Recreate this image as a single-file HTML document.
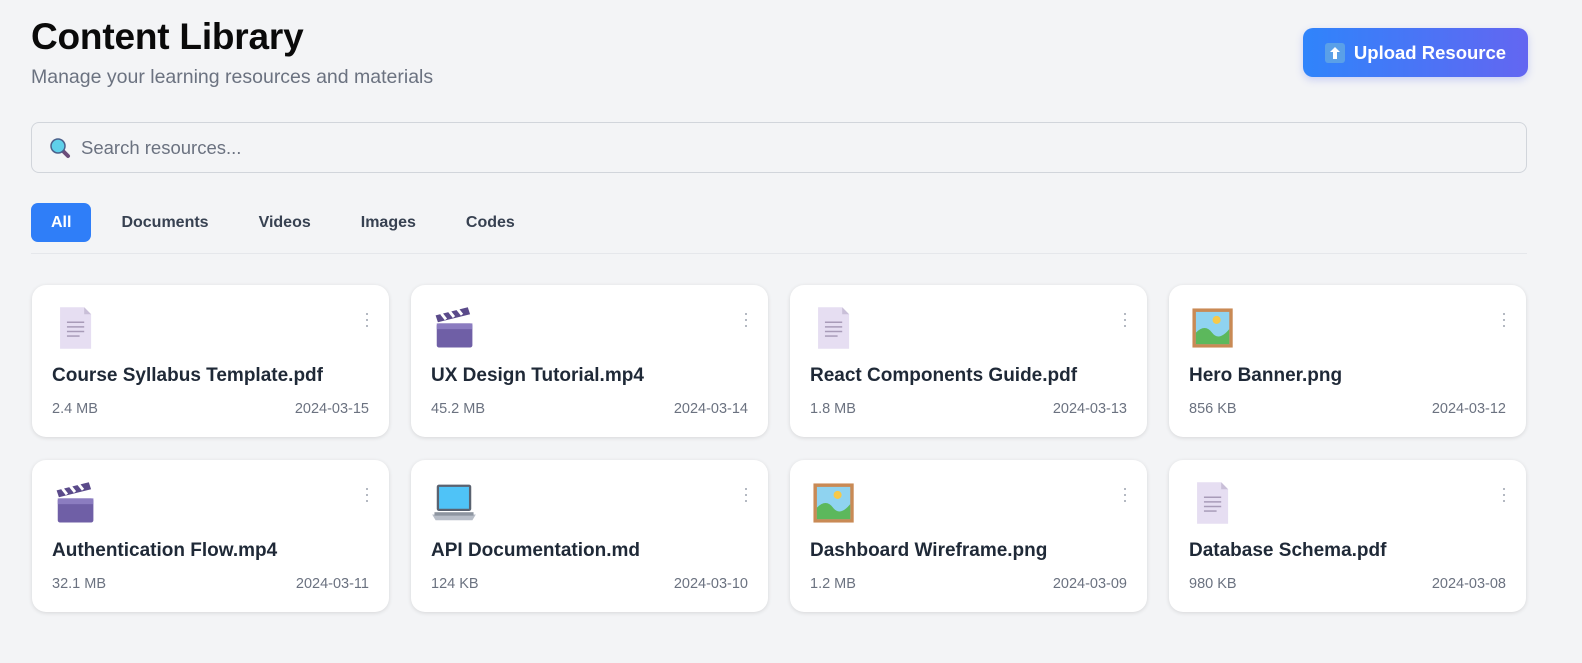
<!DOCTYPE html>
<html><head><meta charset="utf-8"><style>
*{box-sizing:border-box;margin:0;padding:0}
body{width:1582px;height:663px;background:#f3f4f6;font-family:"Liberation Sans","DejaVu Sans",sans-serif;position:relative;overflow:hidden;color:#111827}
h1{position:absolute;left:31px;top:16px;font-size:37px;font-weight:700;color:#0a0a0a;letter-spacing:-0.2px}
.sub{position:absolute;left:31px;top:66px;font-size:19.5px;color:#6b7280}
.up{position:absolute;left:1303px;top:28px;width:225px;height:49px;border-radius:10px;background:linear-gradient(90deg,#2f84fb,#6366f1);color:#fff;font-size:18.5px;font-weight:700;display:flex;align-items:center;justify-content:center;gap:9px;box-shadow:0 3px 8px rgba(80,100,240,.25)}
.up .ic{width:20px;height:20px;background:#5aa0e8;border-radius:3px;display:flex;align-items:center;justify-content:center}
.search{position:absolute;left:31px;top:122px;width:1496px;height:51px;border:1px solid #d1d5db;border-radius:8px;background:#f3f4f6;display:flex;align-items:center;padding-left:17px;gap:10px;font-size:18.5px;color:#6b7280}
.tabs{position:absolute;left:31px;top:203px;display:flex;align-items:center;font-size:16px;font-weight:600;color:#374151}
.tab{height:39px;display:flex;align-items:center;padding:0 20px;margin-right:10px}
.tab.act{background:#2f7ef8;color:#fff;border-radius:7px;padding:0 20px}
.line{position:absolute;left:31px;top:253px;width:1496px;height:1px;background:#e5e7eb}
.card{position:absolute;width:357px;height:152px;background:#fff;border-radius:14px;box-shadow:0 1px 4px rgba(0,0,0,.12)}
.card .icon{position:absolute;left:20px;top:20px;width:46px;height:46px}
.card .dots{position:absolute;right:20px;top:28px;width:3px}
.card .dots i{display:block;width:2px;height:2px;background:#9ca3af;margin-bottom:4px;border-radius:1px}
.card .t{position:absolute;left:20px;top:80px;font-size:19px;font-weight:600;color:#1f2937}
.card .m{position:absolute;left:20px;right:20px;top:116px;font-size:14.5px;color:#6b7280;display:flex;justify-content:space-between}
</style></head><body>
<h1>Content Library</h1>
<div class="sub">Manage your learning resources and materials</div>
<div class="up"><span class="ic"><svg width="12" height="14" viewBox="0 0 12 14"><path d="M6 1L1 6h3v7h4V6h3z" fill="#fff"/></svg></span>Upload Resource</div>
<div class="search"><svg width="22" height="22" viewBox="0 0 22 22"><line x1="13" y1="13" x2="19" y2="19" stroke="#6b4c7a" stroke-width="4" stroke-linecap="round"/><circle cx="9" cy="9" r="7" fill="#5fd0ea" stroke="#4a5f8a" stroke-width="1.5"/></svg>Search resources...</div>
<div class="tabs"><div class="tab act">All</div><div class="tab">Documents</div><div class="tab">Videos</div><div class="tab">Images</div><div class="tab">Codes</div></div>
<div class="line"></div>
<svg width="0" height="0" style="position:absolute"><defs>
<symbol id="doc" viewBox="0 0 40 40"><path d="M7 2h21l6 6v30H7z" fill="#e6def2"/><path d="M28 2v6h6z" fill="#c9bfd8"/><g stroke="#a89bb8" stroke-width="1.3"><line x1="13" y1="15" x2="28" y2="15"/><line x1="13" y1="19" x2="28" y2="19"/><line x1="13" y1="23" x2="28" y2="23"/><line x1="13" y1="27" x2="24" y2="27"/></g></symbol>
<symbol id="vid" viewBox="0 0 40 40"><path d="M4 9l28-7 2 6-28 7z" fill="#5a4a8a"/><path d="M9 7.5l4 5M16 5.5l4 5M23 3.5l4 5" stroke="#fff" stroke-width="2.5"/><rect x="5" y="16" width="31" height="21" rx="2" fill="#6f5fa6"/><rect x="5" y="16" width="31" height="5" fill="#8b7cc0"/></symbol>
<symbol id="img" viewBox="0 0 40 40"><rect x="3" y="3" width="35" height="34" fill="#c98a55"/><rect x="6" y="6" width="29" height="28" fill="#8fd3f0"/><circle cx="24" cy="13" r="3.5" fill="#f7c948"/><path d="M6 34V24q8-8 14 0t15-3v13z" fill="#5cb85c"/></symbol>
<symbol id="lap" viewBox="0 0 40 40"><rect x="5" y="4" width="30" height="23" rx="2" fill="#5a6270"/><rect x="7" y="6" width="26" height="19" fill="#4fc3f7"/><path d="M1 30h38l-3 5H4z" fill="#b8bec8"/><rect x="3" y="28" width="34" height="3" fill="#8e95a0"/></symbol>
</defs></svg>
<div class="card" style="left:32px;top:285px"><svg class="icon"><use href="#doc"/></svg><div class="dots"><i></i><i></i><i></i></div><div class="t">Course Syllabus Template.pdf</div><div class="m"><span>2.4 MB</span><span>2024-03-15</span></div></div>
<div class="card" style="left:411px;top:285px"><svg class="icon"><use href="#vid"/></svg><div class="dots"><i></i><i></i><i></i></div><div class="t">UX Design Tutorial.mp4</div><div class="m"><span>45.2 MB</span><span>2024-03-14</span></div></div>
<div class="card" style="left:790px;top:285px"><svg class="icon"><use href="#doc"/></svg><div class="dots"><i></i><i></i><i></i></div><div class="t">React Components Guide.pdf</div><div class="m"><span>1.8 MB</span><span>2024-03-13</span></div></div>
<div class="card" style="left:1169px;top:285px"><svg class="icon"><use href="#img"/></svg><div class="dots"><i></i><i></i><i></i></div><div class="t">Hero Banner.png</div><div class="m"><span>856 KB</span><span>2024-03-12</span></div></div>
<div class="card" style="left:32px;top:460px"><svg class="icon"><use href="#vid"/></svg><div class="dots"><i></i><i></i><i></i></div><div class="t">Authentication Flow.mp4</div><div class="m"><span>32.1 MB</span><span>2024-03-11</span></div></div>
<div class="card" style="left:411px;top:460px"><svg class="icon"><use href="#lap"/></svg><div class="dots"><i></i><i></i><i></i></div><div class="t">API Documentation.md</div><div class="m"><span>124 KB</span><span>2024-03-10</span></div></div>
<div class="card" style="left:790px;top:460px"><svg class="icon"><use href="#img"/></svg><div class="dots"><i></i><i></i><i></i></div><div class="t">Dashboard Wireframe.png</div><div class="m"><span>1.2 MB</span><span>2024-03-09</span></div></div>
<div class="card" style="left:1169px;top:460px"><svg class="icon"><use href="#doc"/></svg><div class="dots"><i></i><i></i><i></i></div><div class="t">Database Schema.pdf</div><div class="m"><span>980 KB</span><span>2024-03-08</span></div></div>
</body></html>
